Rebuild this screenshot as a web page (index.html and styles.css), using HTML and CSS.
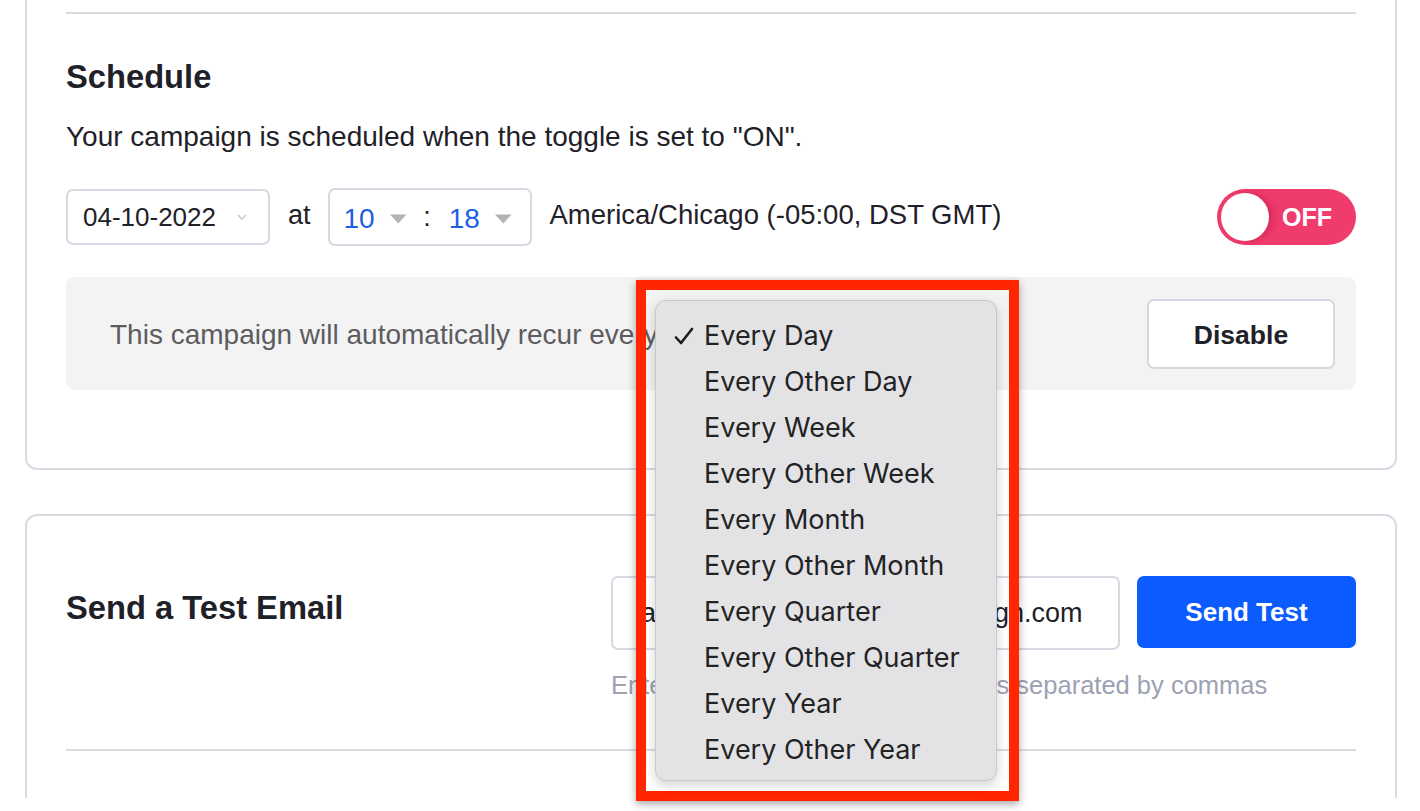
FILE: index.html
```html
<!DOCTYPE html>
<html lang="en">
  <head>
    <meta charset="utf-8" />
    <title>Campaign Schedule</title>
    <link rel="stylesheet" href="styles.css">
  </head>
  <body>
    <div class="viewport">
      <section class="card schedule-card">
        <hr class="divider" />
        <h2 class="card-title">Schedule</h2>
        <p class="hint">Your campaign is scheduled when the toggle is set to "ON".</p>
        <div class="schedule-row">
          <div class="select date-select">
            <span>04-10-2022</span>
            <svg class="chevron" width="12" height="8" viewBox="0 0 12 8">
              <path d="M2 2l4 4 4-4" fill="none" stroke="#c4c6cc" stroke-width="1.4" />
            </svg>
          </div>
          <span class="at">at</span>
          <div class="select time-select">
            <span class="time-num">10</span>
            <svg class="caret" width="18" height="10" viewBox="0 0 18 10"><path d="M0 0h18L9 10z" fill="#b3b3b3" /></svg>
            <span class="colon">:</span>
            <span class="time-num">18</span>
            <svg class="caret" width="18" height="10" viewBox="0 0 18 10"><path d="M0 0h18L9 10z" fill="#b3b3b3" /></svg>
          </div>
          <span class="timezone">America/Chicago (-05:00, DST GMT)</span>
          <div class="toggle">
            <span class="knob"></span>
            <span class="toggle-label">OFF</span>
          </div>
        </div>
        <div class="recur-box">
          <span class="recur-text">This campaign will automatically recur every</span>
          <button class="btn-disable">Disable</button>
        </div>
      </section>

      <section class="card test-card">
        <div class="test-row">
          <h2 class="card-title test-title">Send a Test Email</h2>
          <div class="test-form">
            <div class="test-inputs">
              <input class="email-input" type="text" value="alexis.morgan@activecampaign.com" />
              <button class="btn-send">Send Test</button>
            </div>
            <p class="help">Enter one or more email addresses separated by commas</p>
          </div>
        </div>
        <hr class="divider test-divider" />
      </section>
    </div>

    <!-- annotation over the native select menu -->
    <div class="annotation">
      <ul class="menu">
        <li class="menu-item selected">
          <svg class="check" width="20" height="18" viewBox="0 0 20 18">
            <path d="M2 10.5l5 5.5L18 2" fill="none" stroke="#1e1e1e" stroke-width="2.6" stroke-linecap="round" stroke-linejoin="round" />
          </svg>
          Every Day
        </li>
        <li class="menu-item">Every Other Day</li>
        <li class="menu-item">Every Week</li>
        <li class="menu-item">Every Other Week</li>
        <li class="menu-item">Every Month</li>
        <li class="menu-item">Every Other Month</li>
        <li class="menu-item">Every Quarter</li>
        <li class="menu-item">Every Other Quarter</li>
        <li class="menu-item">Every Year</li>
        <li class="menu-item">Every Other Year</li>
      </ul>
    </div>
  </body>
</html>
```

FILE: styles.css
```css
* {
  box-sizing: border-box;
}

body,
h2,
p,
ul,
button,
input {
  margin: 0;
  padding: 0;
  font-family: "Liberation Sans", Arial, sans-serif;
}

body {
  background-color: white;
  color: #1f2129;
}

.viewport {
  height: 798px;
  overflow: hidden;
  padding: 0 23px 0 25px;
}

.card {
  border: 2px solid #d9dbe3;
  border-radius: 12px;
  background-color: white;
  padding: 0 39px;
}
.schedule-card {
  border-top: 0;
  border-radius: 0 0 12px 12px;
  padding-top: 12px;
  padding-bottom: 78px;
}
.test-card {
  margin-top: 44px;
  padding-top: 60px;
  padding-bottom: 60px;
}

.divider {
  border: 0;
  border-top: 2px solid #d9dbe3;
  margin: 0;
}

.card-title {
  font-size: 32.7px;
  line-height: 40px;
  font-weight: bold;
  margin-top: 43px;
}
.hint {
  font-size: 28px;
  line-height: 34px;
  margin-top: 23px;
}

.schedule-row {
  display: flex;
  align-items: center;
  margin-top: 34px;
  height: 58px;
}
.select {
  display: flex;
  align-items: center;
  border: 2px solid #d7d9e2;
  border-radius: 7px;
  background-color: white;
}
.date-select {
  width: 204px;
  height: 56px;
  padding: 0 0 0 15px;
  font-size: 26px;
}
.chevron {
  margin-left: 20px;
}
.at {
  font-size: 27px;
  margin: 0 17px 4px 18px;
}
.time-select {
  width: 204px;
  height: 58px;
  padding: 4px 0 0 14px;
}
.time-num {
  color: #1c5fe3;
  font-size: 28px;
}
.caret {
  margin: 0 18px 0 15px;
}
.colon {
  font-size: 27px;
  margin: -4px 18px 0 -1px;
}
.timezone {
  font-size: 27.5px;
  margin-left: 18px;
  flex-grow: 1;
  padding-bottom: 4px;
}

.toggle {
  display: flex;
  align-items: center;
  width: 139px;
  height: 56px;
  border-radius: 28px;
  background-color: #f03b6d;
  padding-left: 4px;
}
.knob {
  width: 48px;
  height: 48px;
  border-radius: 50%;
  background-color: white;
  box-shadow: 5px 0 6px rgba(170, 20, 60, 0.35);
}
.toggle-label {
  color: white;
  font-size: 25px;
  font-weight: bold;
  margin-left: 13px;
}

.recur-box {
  display: flex;
  align-items: center;
  justify-content: space-between;
  height: 113px;
  margin-top: 31px;
  padding: 0 21px 0 44px;
  background-color: #f3f3f4;
  border-radius: 9px;
}
.recur-text {
  font-size: 28px;
  color: #5c5c5f;
  padding-top: 2px;
}
.btn-disable {
  width: 188px;
  height: 70px;
  background-color: white;
  border: 2px solid #d5d8e2;
  border-radius: 7px;
  font-size: 26.5px;
  font-weight: bold;
  color: #1f2129;
  padding-top: 3px;
}

.test-row {
  display: flex;
  justify-content: space-between;
}
.test-title {
  margin-top: 12px;
}
.test-form {
  width: 745px;
}
.test-inputs {
  display: flex;
  gap: 17px;
}
.email-input {
  width: 509px;
  height: 74px;
  border: 2px solid #d7d9e2;
  border-radius: 7px;
  padding: 0 0 0 28px;
  font-size: 27px;
  color: #1f2129;
}
.btn-send {
  width: 219px;
  height: 72px;
  border: 0;
  border-radius: 7px;
  background-color: #0c5bff;
  color: white;
  font-size: 26px;
  font-weight: bold;
}
.help {
  font-size: 25.5px;
  line-height: 30px;
  margin-top: 20px;
  color: #9ca1b3;
}
.test-divider {
  margin-top: 49px;
}

.annotation {
  position: absolute;
  left: 636px;
  top: 280px;
  width: 383px;
  height: 521px;
  border: 10px solid #ff2600;
  box-shadow: 0 3px 8px rgba(0, 0, 0, 0.35);
  padding: 10px 12px 10px 9px;
}
.menu {
  list-style: none;
  height: 481px;
  background-color: #e3e3e5;
  border: 1px solid #c9c9cc;
  border-radius: 11px;
  box-shadow: 0 4px 12px rgba(0, 0, 0, 0.18);
  padding: 12px 0 0 48px;
  font-family: Inter, "Liberation Sans", sans-serif;
}
.menu-item {
  position: relative;
  font-size: 27px;
  line-height: 46px;
  color: #232325;
}
.check {
  position: absolute;
  left: -30px;
  top: 14px;
}
```
